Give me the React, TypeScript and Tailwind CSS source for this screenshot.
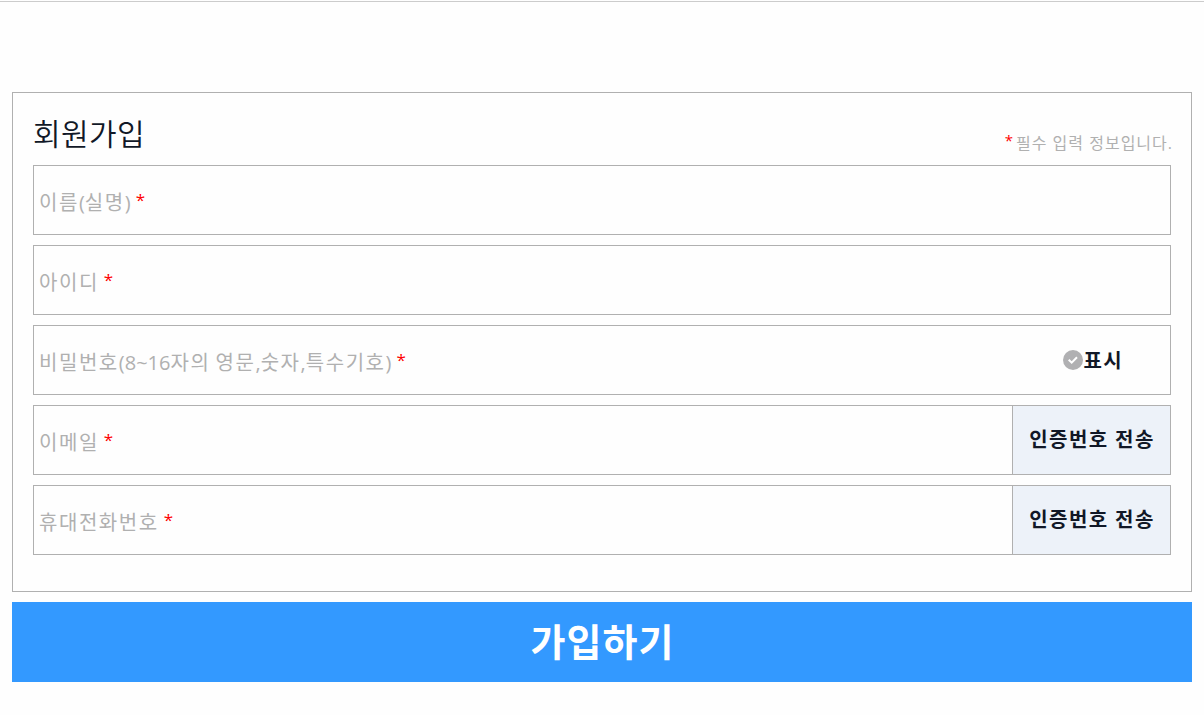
const fields = [
  { id: 'name', label: '이름(실명)' },
  { id: 'userId', label: '아이디' },
  { id: 'password', label: '비밀번호(8~16자의 영문,숫자,특수기호)', toggle: true },
  { id: 'email', label: '이메일', verify: true },
  { id: 'phone', label: '휴대전화번호', verify: true },
];

// wider tracking for hangul only, digits and punctuation stay tight
function LabelText({ text }: { text: string }) {
  return text.split(/([가-힣]+)/).map((part, i) => (
    <span key={i} className={i % 2 ? 'text-xl tracking-[1.55px]' : ''}>{part}</span>
  ));
}

function CheckIcon() {
  return (
    <svg viewBox="0 0 20 20" className="size-5">
      <circle cx="10" cy="10" r="10" fill="#b0b0b2" />
      <path d="M5.7 9.8l3 2.9 5.3-5.4" fill="none" stroke="#ffffff" strokeWidth="2" />
    </svg>
  );
}

export default function App() {
  return (
    <div className="h-[715px] overflow-hidden bg-[#fefefe] px-3 font-['Open_Sans','Noto_Sans_CJK_KR',sans-serif] text-[#111827]">
      <div className="-mx-3 mt-px h-px bg-[#cccccc]"></div>
      <form className="pt-[90px]">
        <div className="h-[500px] border border-[#b0b0b0] px-5 pt-5">
          <div className="flex h-[52px] items-start justify-between">
            <h1 className="-mt-px font-['Noto_Sans_CJK_KR',sans-serif] text-[30px] font-[350] leading-10 tracking-[0.4px]">회원가입</h1>
            <p className="-mr-0.5 flex gap-[3px] pt-[18px] text-base leading-6 tracking-[1px] text-[#b0b0b0]">
              <span className="-mt-[3px] text-[15px] tracking-normal text-[#ff0000]">*</span>
              필수 입력 정보입니다.
            </p>
          </div>

          <div className="flex flex-col gap-2.5">
            {fields.map((f) => (
              <div key={f.id} className="flex h-[70px] items-center border border-[#b0b0b0]">
                <label className="flex flex-1 pl-[5px] pt-1.5 text-xl leading-7 text-[#b0b0b0]">
                  <span className="whitespace-pre"><LabelText text={f.label} /></span>
                  <span className="-mt-[3px] ml-[5px] text-[17px] leading-7 text-[#ff0000]">*</span>
                </label>
                {f.toggle && (
                  <button type="button" className="mr-[47px] flex items-center text-xl font-bold tracking-[1.4px]">
                    <CheckIcon />
                    <span className="pt-0.5">표시</span>
                  </button>
                )}
                {f.verify && (
                  <button type="button" className="h-full w-[158px] border-l border-[#b0b0b0] bg-[#edf2f9] pl-px text-xl font-bold tracking-[1.4px]">
                    인증번호 전송
                  </button>
                )}
              </div>
            ))}
          </div>
        </div>

        <button type="submit" className="mt-2.5 h-20 w-full bg-[#3399ff] pb-0.5 pl-px text-[38px] font-bold tracking-[1px] text-white">
          가입하기
        </button>
      </form>
    </div>
  );
}
